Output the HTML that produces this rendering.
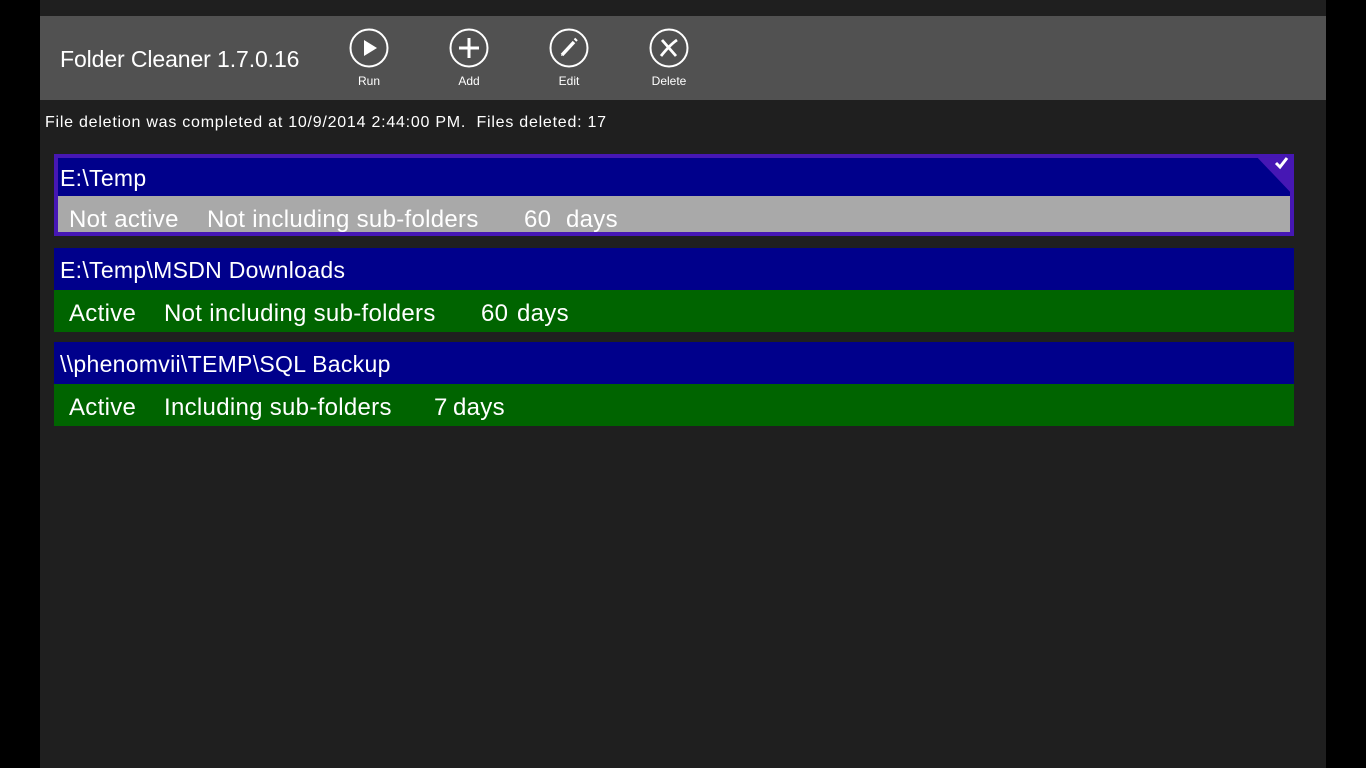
<!DOCTYPE html>
<html><head><meta charset="utf-8"><style>
body{margin:0;width:1366px;height:768px;background:#000;position:relative;overflow:hidden;font-family:"Liberation Sans",sans-serif;color:#fff}
.main{position:absolute;left:40px;top:0;width:1286px;height:768px;background:#1f1f1f}
.hdr{position:absolute;left:40px;top:16px;width:1286px;height:84px;background:#515151}
.title{position:absolute;left:60px;top:46px;font-size:23px;letter-spacing:-0.1px}
.btn{position:absolute;top:28px;width:80px;text-align:center;font-size:12px}
.btn svg{display:block;margin:0 auto 6px}
.status{position:absolute;left:45px;top:114px;font-size:16px;letter-spacing:0.76px}
.item{position:absolute;left:54px;width:1240px}
.path{height:42px;background:#00008b;font-size:23px;line-height:44px;padding-left:6px;box-sizing:border-box;letter-spacing:0.3px}
.info{height:42px;background:#006400;font-size:24px;line-height:48px;position:relative;letter-spacing:0.3px}
.info span,.g span{position:absolute;top:0}
</style></head><body>
<div class="main"></div>
<div class="hdr"></div>
<div class="title">Folder Cleaner 1.7.0.16</div>
<div class="btn" style="left:329px"><svg width="40" height="40" viewBox="0 0 40 40"><circle cx="20" cy="20" r="18.5" fill="none" stroke="#fff" stroke-width="2"/><path d="M15 12 L28 20 L15 28Z" fill="#fff"/></svg>Run</div>
<div class="btn" style="left:429px"><svg width="40" height="40" viewBox="0 0 40 40"><circle cx="20" cy="20" r="18.5" fill="none" stroke="#fff" stroke-width="2"/><path d="M20 10V30M10 20H30" stroke="#fff" stroke-width="3"/></svg>Add</div>
<div class="btn" style="left:529px"><svg width="40" height="40" viewBox="0 0 40 40"><circle cx="20" cy="20" r="18.5" fill="none" stroke="#fff" stroke-width="2"/><path d="M13 27 L25 14" stroke="#fff" stroke-width="3.5"/><path d="M26 12.5 L27.5 11" stroke="#fff" stroke-width="3.5"/><path d="M12 28 l1-3 2 2z" fill="#fff"/></svg>Edit</div>
<div class="btn" style="left:629px"><svg width="40" height="40" viewBox="0 0 40 40"><circle cx="20" cy="20" r="18.5" fill="none" stroke="#fff" stroke-width="2"/><path d="M13 12 L27 28 M28 12 C22 16 16 23 12 28" stroke="#fff" stroke-width="2.8" fill="none"/></svg>Delete</div>
<div class="status">File deletion was completed at 10/9/2014 2:44:00 PM.&nbsp; Files deleted: 17</div>
<div class="item" style="top:154px;height:82px;background:#4617b4">
 <div style="position:absolute;left:4px;top:4px;right:4px;height:38px;background:#00008b;font-size:23px;line-height:40px;padding-left:2px;letter-spacing:0.3px">E:\Temp</div>
 <div class="g" style="position:absolute;left:4px;top:42px;right:4px;height:36px;background:#a9a9a9;font-size:24px;line-height:48px;letter-spacing:0.3px"><span style="left:11px">Not active</span><span style="left:149px">Not including sub-folders</span><span style="left:466px">60</span><span style="left:508px">days</span></div>
 <svg style="position:absolute;right:0;top:0" width="40" height="42"><path d="M0 0H40V42Z" fill="#4617b4"/><path d="M22 9 L26 13 L33 4" stroke="#fff" stroke-width="3" fill="none"/></svg>
</div>
<div class="item" style="top:248px"><div class="path">E:\Temp\MSDN Downloads</div><div class="info"><span style="left:15px">Active</span><span style="left:110px">Not including sub-folders</span><span style="left:427px">60</span><span style="left:463px">days</span></div></div>
<div class="item" style="top:342px"><div class="path">\\phenomvii\TEMP\SQL Backup</div><div class="info"><span style="left:15px">Active</span><span style="left:110px">Including sub-folders</span><span style="left:380px">7</span><span style="left:399px">days</span></div></div>
</body></html>
